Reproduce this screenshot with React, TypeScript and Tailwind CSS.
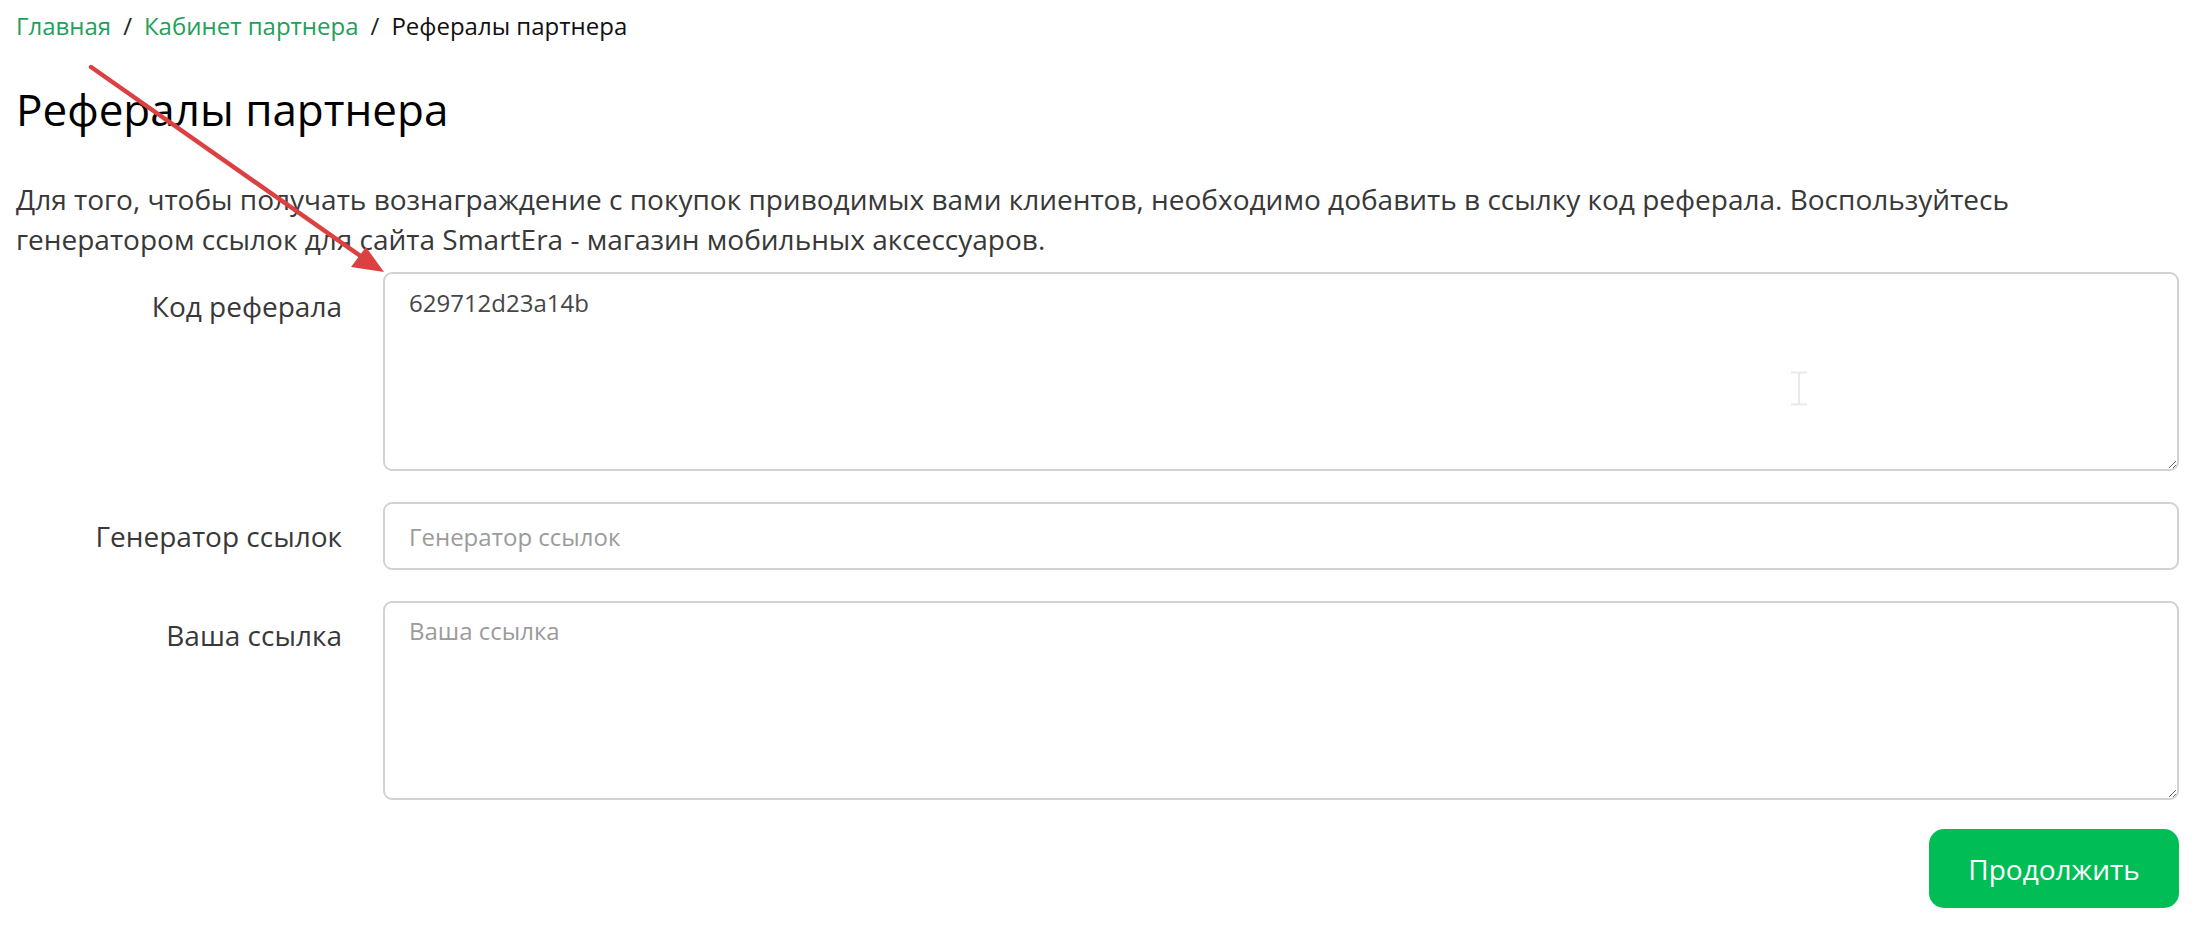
import React from "react"

// ============================================================================
// FORM ROW
// ============================================================================

interface RowProps {
  label: string
  children: React.ReactNode
}

function FormRow({ label, children }: RowProps) {
  return (
    <div className="flex">
      <label className="w-[367px] shrink-0 pr-[41px] pt-[13px] text-right text-[28px] leading-[42px] text-[#383838]">
        {label}
      </label>
      <div className="flex-1">{children}</div>
    </div>
  )
}

const fieldClass =
  "block w-full rounded-[9px] border-2 border-[#d2d2d2] bg-white px-[24px] text-[24px] leading-[36px] text-[#464646] placeholder:text-[#9b9b9b] outline-none"

// ============================================================================
// PAGE
// ============================================================================

export default function App() {
  return (
    <div className="relative min-h-screen bg-white pl-[16px] pr-[26px] font-['Open_Sans',sans-serif]">
      {/* Breadcrumb */}
      <nav className="flex items-center pt-[8px] text-[24px] leading-[36px]">
        <a className="text-[#22a05a]">Главная</a>
        <span className="px-[12px] text-[#222]">/</span>
        <a className="text-[#22a05a]">Кабинет партнера</a>
        <span className="px-[12px] text-[#222]">/</span>
        <span className="text-[#111]">Рефералы партнера</span>
      </nav>

      {/* Header */}
      <h1 className="mt-[39px] text-[44px] font-normal leading-[53px] text-black">Рефералы партнера</h1>
      <p className="mt-[43px] text-[28px] leading-[40px] text-[#383838]">
        Для того, чтобы получать вознаграждение с покупок приводимых вами клиентов, необходимо добавить в ссылку код
        реферала. Воспользуйтесь
        <br />
        генератором ссылок для сайта SmartEra - магазин мобильных аксессуаров.
      </p>

      {/* Form */}
      <form className="mt-[13px] flex flex-col gap-[31px]">
        <FormRow label="Код реферала">
          <textarea className={`${fieldClass} h-[199px] pt-[11px]`} defaultValue="629712d23a14b" />
        </FormRow>
        <FormRow label="Генератор ссылок">
          <input className={`${fieldClass} h-[68px] py-[14px]`} placeholder="Генератор ссылок" />
        </FormRow>
        <FormRow label="Ваша ссылка">
          <textarea className={`${fieldClass} h-[199px] pt-[10px]`} placeholder="Ваша ссылка" />
        </FormRow>
      </form>

      <div className="mt-[29px] flex justify-end">
        <button className="h-[79px] w-[250px] rounded-[15px] bg-[#00bd56] text-[28px] text-white">Продолжить</button>
      </div>

      {/* Annotation arrow */}
      <svg className="pointer-events-none absolute left-0 top-0" width="420" height="300" viewBox="0 0 420 300">
        <line x1="91" y1="67" x2="362" y2="257" stroke="#dd4040" strokeWidth="4.5" strokeLinecap="round" />
        <polygon points="384,272 351,267 366,247" fill="#dd4040" />
      </svg>

      {/* Text cursor */}
      <svg className="pointer-events-none absolute left-[1788px] top-[371px]" width="22" height="35" viewBox="0 0 22 35">
        <path d="M3 1.5h6M13 1.5h6M11 3v29M3 33.5h6M13 33.5h6M9 1.5c1.5 0 2 .8 2 1.5 0-.7.5-1.5 2-1.5M9 33.5c1.5 0 2-.8 2-1.5 0 .7.5 1.5 2 1.5" stroke="#e9e9e9" strokeWidth="2" fill="none" />
      </svg>
    </div>
  )
}
